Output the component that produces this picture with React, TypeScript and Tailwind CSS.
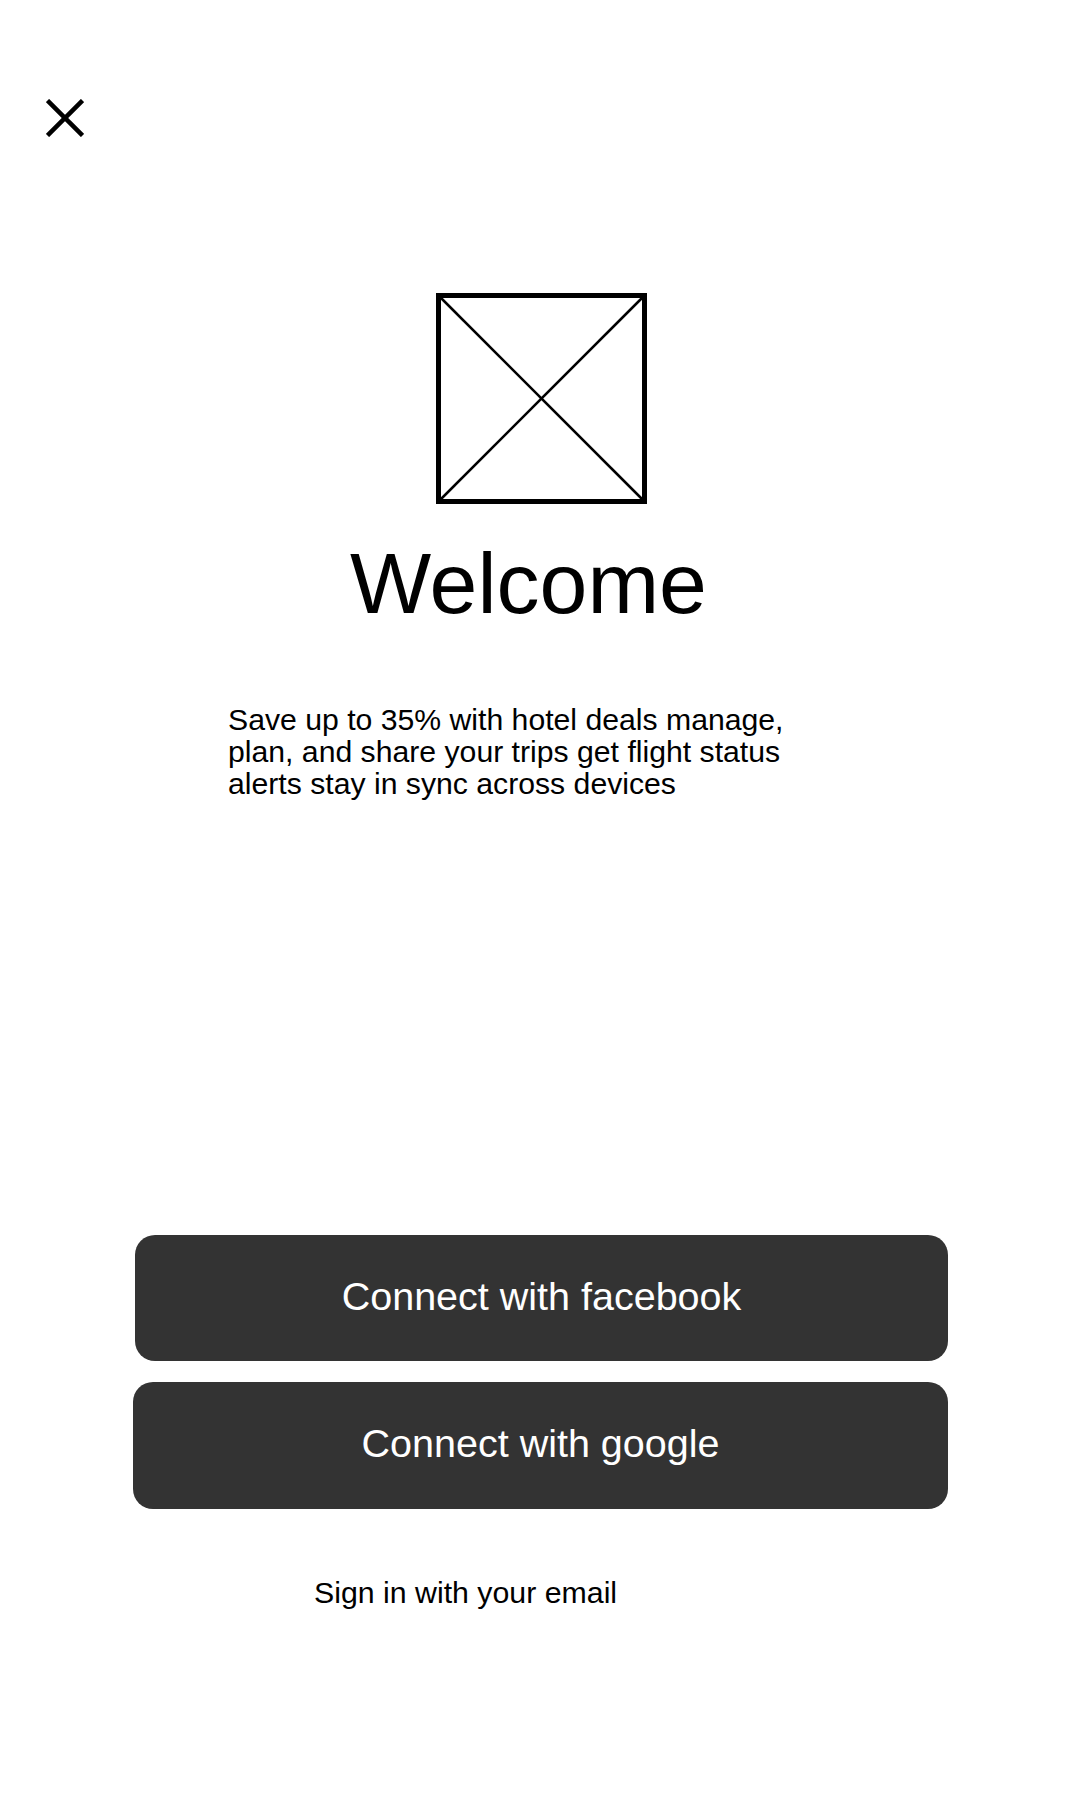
function CloseIcon() {
  return (
    <svg width="38" height="38" viewBox="0 0 38 38" fill="none">
      <line x1="1.5" y1="1.5" x2="36.5" y2="36.5" stroke="#000" strokeWidth="4.5" />
      <line x1="36.5" y1="1.5" x2="1.5" y2="36.5" stroke="#000" strokeWidth="4.5" />
    </svg>
  );
}

function ImagePlaceholder() {
  return (
    <svg width="211" height="211" viewBox="0 0 211 211" fill="none">
      <rect x="2.5" y="2.5" width="206" height="206" stroke="#000" strokeWidth="5" />
      <line x1="2" y1="2" x2="209" y2="209" stroke="#000" strokeWidth="2.5" />
      <line x1="209" y1="2" x2="2" y2="209" stroke="#000" strokeWidth="2.5" />
    </svg>
  );
}

function ConnectButton({ label, className }: { label: string; className?: string }) {
  return (
    <button
      className={
        'flex items-center justify-center rounded-[20px] bg-[#333333] pb-[3px] text-[39.5px] text-white ' +
        (className ?? '')
      }
    >
      {label}
    </button>
  );
}

export default function App() {
  return (
    <div className="flex min-h-[1800px] w-full flex-col bg-white font-['Liberation_Sans',Arial,sans-serif] text-black">
      <div className="pl-[46px] pt-[99px]">
        <CloseIcon />
      </div>

      <div className="ml-[436px] mt-[156px]">
        <ImagePlaceholder />
      </div>

      <h1 className="ml-[350px] mt-[36px] text-[86px] leading-none">Welcome</h1>

      <p className="ml-[228px] mt-[78px] w-[585px] text-[30.2px] leading-[32px]">
        Save up to 35% with hotel deals manage, plan, and share your trips get flight status
        alerts stay in sync across devices
      </p>

      <ConnectButton
        label="Connect with facebook"
        className="ml-[135px] mt-[435px] h-[126px] w-[813px]"
      />
      <ConnectButton label="Connect with google" className="ml-[133px] mt-[21px] h-[127px] w-[815px]" />

      <a className="ml-[314px] mt-[67px] text-[30.3px] leading-[34px]">Sign in with your email</a>
    </div>
  );
}
